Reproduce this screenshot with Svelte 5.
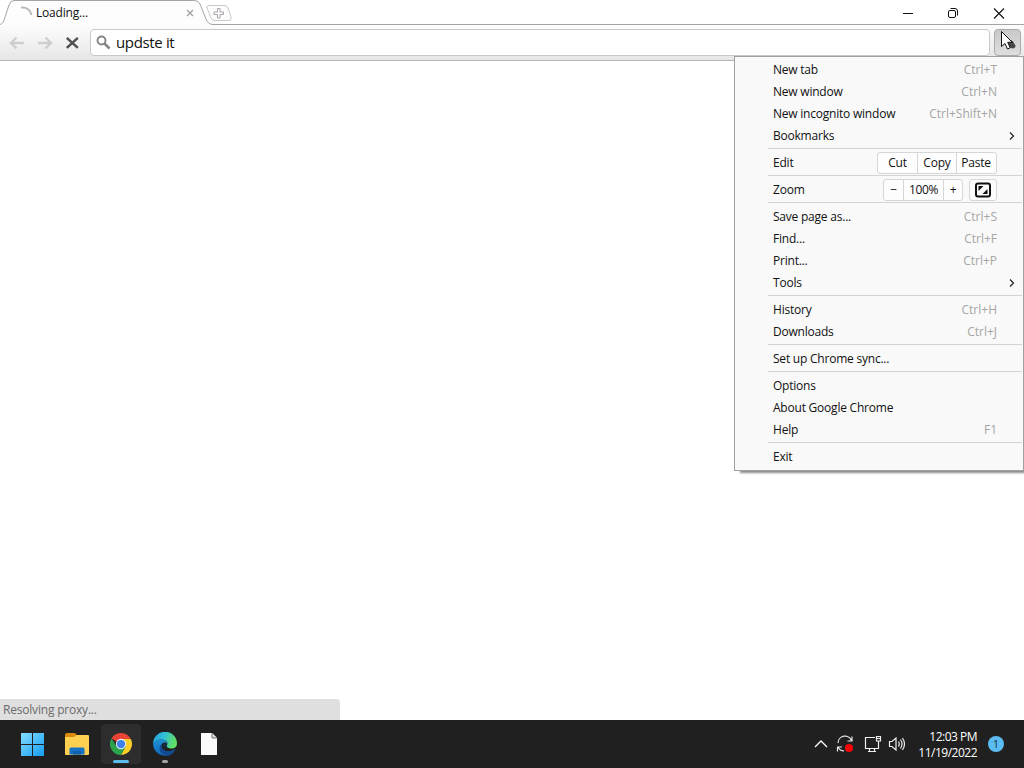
<script>
  const menu = [
    [
      { label: 'New tab', keys: 'Ctrl+T' },
      { label: 'New window', keys: 'Ctrl+N' },
      { label: 'New incognito window', keys: 'Ctrl+Shift+N' },
      { label: 'Bookmarks', submenu: true },
    ],
    [{ label: 'Edit', kind: 'edit' }],
    [{ label: 'Zoom', kind: 'zoom' }],
    [
      { label: 'Save page as...', keys: 'Ctrl+S' },
      { label: 'Find...', keys: 'Ctrl+F' },
      { label: 'Print...', keys: 'Ctrl+P' },
      { label: 'Tools', submenu: true },
    ],
    [
      { label: 'History', keys: 'Ctrl+H' },
      { label: 'Downloads', keys: 'Ctrl+J' },
    ],
    [{ label: 'Set up Chrome sync...' }],
    [
      { label: 'Options' },
      { label: 'About Google Chrome' },
      { label: 'Help', keys: 'F1' },
    ],
    [{ label: 'Exit' }],
  ];

  let query = $state('updste it');
</script>

<div class="desktop">
  <header class="tabstrip">
    <div class="tab">
      <svg class="tab-shape" width="240" height="25" viewBox="0 0 240 25">
        <path d="M0 24.5C4 23 4 20 6 14L9 5Q10.500 .5 14 .5H194Q198.500 .5 200 4L206 19Q208 24.500 213 24.500V25H0Z" fill="#fdfdfd" />
        <path d="M0 24.5C4 23 4 20 6 14L9 5Q10.500 .5 14 .5H194Q198.500 .5 200 4L206 19Q208 24.500 213 24.500H240" fill="none" stroke="#a5a5a5" />
        <path d="M209 5.500H225Q227 5.500 228 8L231 17Q232 20.500 229 20.500H214Q212 20.500 211 18L207 8Q206.500 5.500 209 5.500Z" fill="#fcfcfc" stroke="#c9c9c9" />
        <path d="M217.500 8.500h2.500v3.500h3.500v2.500h-3.500v3.500h-2.500v-3.500h-3.500v-2.500h3.500Z" fill="#fff" stroke="#aaa3aa" />
      </svg>
      <svg class="spinner" width="14" height="14" viewBox="0 0 14 14">
        <path d="M1 1.700A8.500 8.500 0 0 1 11.300 9" fill="none" stroke="#b9b9b9" stroke-width="1.800" />
      </svg>
      <span class="tab-title">Loading...</span>
      <svg class="tab-close" width="8" height="8" viewBox="0 0 8 8">
        <path d="M1 1l6 6M7 1L1 7" stroke="#a5a0a5" stroke-width="1.400" />
      </svg>
    </div>
    <div class="window-buttons">
      <svg width="12" height="12" viewBox="0 0 12 12"><path d="M1 6.500h10" stroke="#111" /></svg>
      <svg width="12" height="12" viewBox="0 0 12 12" fill="none" stroke="#111">
        <rect x="1.500" y="3.500" width="7" height="7" rx="1.500" />
        <path d="M3.500 1.500h4.500q2.500 0 2.500 2.500v4.500" />
      </svg>
      <svg width="12" height="12" viewBox="0 0 12 12"><path d="M1 1.500l10 10M11 1.500l-10 10" stroke="#111" stroke-width="1.100" /></svg>
    </div>
  </header>

  <div class="toolbar">
    <svg class="nav" width="16" height="14" viewBox="0 0 16 14" fill="none" stroke="#cecece" stroke-width="2.400">
      <path d="M7.500 1.500L2 7l5.500 5.500M2.500 7H15" />
    </svg>
    <svg class="nav" width="16" height="14" viewBox="0 0 16 14" fill="none" stroke="#cecece" stroke-width="2.400">
      <path d="M8.500 1.500L14 7l-5.500 5.500M13.500 7H1" />
    </svg>
    <svg class="nav stop" width="14" height="14" viewBox="0 0 14 14" fill="none" stroke="#505050" stroke-width="2.500">
      <path d="M1.800 1.800l11 10M12.800 1.800L1.800 11.800" />
    </svg>
    <div class="omnibox">
      <svg width="15" height="15" viewBox="0 0 15 15" fill="none" stroke="#858585">
        <circle cx="5.500" cy="5.500" r="4" stroke-width="1.900" />
        <path d="M8.500 8.500l5 5" stroke-width="2.700" />
      </svg>
      <span>{query}</span>
    </div>
    <div class="wrench"></div>
  </div>

  <main class="page">
    <div class="status">Resolving proxy...</div>
  </main>

  <footer class="taskbar">
    <div class="apps">
      <div class="app">
        <svg width="24" height="24" viewBox="0 0 24 24">
          <defs>
            <linearGradient id="win" x1="0" y1="0" x2="1" y2="1">
              <stop offset="0" stop-color="#86deff" />
              <stop offset="1" stop-color="#139df2" />
            </linearGradient>
          </defs>
          <path d="M0 1h11v11H0ZM12 1h11v11H12ZM0 13h11v11H0ZM12 13h11v11H12Z" fill="url(#win)" />
        </svg>
      </div>
      <div class="app">
        <svg width="26" height="24" viewBox="0 0 26 24">
          <path d="M1 3q0-2 2-2h7q2 0 2.500 2l.5 3H1Z" fill="#d98c0b" />
          <path d="M1 5h9l2.500-2H24q1 0 1 1v18q0 1-1 1H2q-1 0-1-1Z" fill="#fdd052" />
          <path d="M5.500 22.500V17q0-1.500 1.500-1.500h12q1.500 0 1.500 1.500v5.500Z" fill="#1673c4" />
          <path d="M9 22.500V20q0-1 1-1h6q1 0 1 1v2.500Z" fill="#0f62b0" />
        </svg>
      </div>
      <div class="app active">
        <svg width="22" height="22" viewBox="0 0 24 24">
          <path d="M12 12L1.600 6A12 12 0 0 1 22.400 6Z" fill="#e94335" />
          <path d="M12 6.500H22.700A12 12 0 0 1 12 24L16.800 14.700Z" fill="#fdce28" />
          <path d="M1.600 6A12 12 0 0 0 12 24L17 15L7.200 14.700Z" fill="#2ba24c" />
          <circle cx="12" cy="12" r="5.600" fill="#e8eef5" />
          <circle cx="12" cy="12" r="4.500" fill="#3e80e9" />
        </svg>
        <i class="bar"></i>
      </div>
      <div class="app">
        <svg width="24" height="24" viewBox="0 0 24 24">
          <defs>
            <linearGradient id="edge-top" x1="0" y1="0" x2="1" y2=".3">
              <stop offset="0" stop-color="#1f9fe0" />
              <stop offset=".5" stop-color="#31bfd6" />
              <stop offset="1" stop-color="#61de65" />
            </linearGradient>
            <linearGradient id="edge-body" x1="0" y1="0" x2="0" y2="1">
              <stop offset="0" stop-color="#2192d5" />
              <stop offset="1" stop-color="#0c69bb" />
            </linearGradient>
          </defs>
          <path d="M0 12A12 12 0 0 1 24 11.500C24 15.500 20.500 17 17.500 16.500Q13 16 14 13.500Q16 8.500 9 7.500Q3 7 0 12Z" fill="url(#edge-top)" />
          <path d="M0 12Q3 7 9 7.300Q14 8.500 14.500 12Q13 9.500 10 11Q7 13 9 17Q13 22 22.500 17.500A12 12 0 0 1 0 12Z" fill="url(#edge-body)" />
          <path d="M10.500 10.500Q7.500 13 9.500 16.500Q13.500 21.500 22.500 17.500Q19 23.500 13.500 24Q6.500 22 6.500 16Q7 12 10.500 10.500Z" fill="#124b93" />
          <path d="M10.500 10.800Q13.500 10 14 13.500Q13 15.500 16 16.500Q11 17 10 13.500Q9.700 12 10.500 10.800Z" fill="#1c2b3a" />
        </svg>
        <i class="dot"></i>
      </div>
      <div class="app">
        <svg width="18" height="24" viewBox="0 0 18 24">
          <path d="M1 1h11l5 5v17H1Z" fill="#fafafa" />
          <path d="M12 1v5h5" fill="#ddd" stroke="#555" stroke-width=".8" />
        </svg>
      </div>
    </div>

    <div class="tray">
      <svg width="14" height="10" viewBox="0 0 14 10" fill="none" stroke="#fff" stroke-width="1.300"><path d="M1 8l6-6 6 6" /></svg>
      <svg class="sync" width="18" height="18" viewBox="0 0 18 18" fill="none" stroke="#e8e8e8" stroke-width="1.200">
        <path d="M2 8A7 7 0 0 1 15.500 5.500M16 1.500v4.500h-4.500M1.500 16.500V12H6M2 12A7 7 0 0 0 8 16" />
        <circle cx="13" cy="13" r="4" fill="#f50505" stroke="none" />
      </svg>
      <svg class="network" width="18" height="18" viewBox="0 0 18 18" fill="none" stroke="#eee" stroke-width="1.200">
        <path d="M11 2.500H1.500v11h13V9M5.500 13.500v3M10.500 13.500v3M4 16.500h8" />
        <path d="M12.500 1.500h4v4.500h-4ZM14.500 6v3M12.500 3.500h4" />
      </svg>
      <svg class="volume" width="18" height="16" viewBox="0 0 18 16" fill="none" stroke="#eee" stroke-width="1.200">
        <path d="M1.500 5.500H4L8 2v12L4 10.500H1.500Z" />
        <path d="M10.500 5.500q1.500 2.500 0 5M12.500 3.500q3 4.500 0 9M14.500 2q4 6 0 12" />
      </svg>
      <div class="clock">
        <span>12:03 PM</span>
        <span>11/19/2022</span>
      </div>
      <div class="badge">1</div>
    </div>
  </footer>

  <nav class="menu">
    {#each menu as group, i}
      {#if i > 0}
        <hr />
      {/if}
      {#each group as item}
        <div class="item">
          <span class="label">{item.label}</span>
          {#if item.keys}
            <span class="keys">{item.keys}</span>
          {:else if item.submenu}
            <svg class="arrow" width="6" height="10" viewBox="0 0 6 10" fill="none" stroke="#222" stroke-width="1.200"><path d="M1 1.500L4.500 5 1 8.500" /></svg>
          {:else if item.kind === 'edit'}
            <div class="buttons edit">
              <span>Cut</span>
              <span>Copy</span>
              <span>Paste</span>
            </div>
          {:else if item.kind === 'zoom'}
            <div class="buttons zoom">
              <span>−</span>
              <span class="percent">100%</span>
              <span>+</span>
            </div>
            <div class="buttons fullscreen">
              <svg width="16" height="16" viewBox="0 0 16 16">
                <rect x="1" y="1.500" width="14" height="13" rx="2" fill="#fff" stroke="#111" stroke-width="2" />
                <path d="M3.500 4h5l-5 5ZM12.500 12h-5l5-5Z" fill="#111" />
              </svg>
            </div>
          {/if}
        </div>
      {/each}
    {/each}
  </nav>

  <svg class="cursor" width="18" height="22" viewBox="0 0 18 22">
    <path d="M8 13l3-3 2 1.500 2.500 4q0 3-3 3L9 17Z" fill="#484848" />
    <path d="M1.500 1.500v15l3.500-3 2.500 5.500 2.700-1.200-2.500-5.500h4.600Z" fill="#fff" stroke="#111" />
  </svg>
</div>

<style>
  :global(body) {
    margin: 0;
    overflow: hidden;
  }

  .desktop {
    position: relative;
    display: flex;
    flex-direction: column;
    width: 1024px;
    height: 768px;
    background: #fff;
    color: #111;
    font-family: 'Open Sans', 'Noto Sans', sans-serif;
    font-size: 12px;
  }

  .desktop * {
    box-sizing: border-box;
  }

  svg {
    display: block;
    flex-shrink: 0;
  }

  .tabstrip {
    display: flex;
    justify-content: space-between;
    height: 25px;
    background: linear-gradient(#a5a5a5, #a5a5a5) bottom right / 784px 1px no-repeat;
  }

  .tab {
    position: relative;
    display: flex;
    align-items: center;
    width: 240px;
    padding-left: 20px;
  }

  .tab-shape {
    position: absolute;
    left: 0;
    top: 0;
  }

  .spinner,
  .tab-title,
  .tab-close {
    position: relative;
  }

  .tab-title {
    width: 150px;
    margin-left: 2px;
    letter-spacing: -0.2px;
  }

  .window-buttons {
    display: flex;
    align-items: center;
    gap: 34px;
    padding-right: 19px;
  }

  .window-buttons svg:first-child {
    margin-right: -1px;
  }

  .toolbar {
    display: flex;
    align-items: center;
    height: 36px;
    padding: 0 3px 0 9px;
    background: linear-gradient(#fdfdfd, #e6e6e6);
    border-bottom: 1px solid #b5b5b5;
  }

  .nav {
    margin-right: 12px;
  }

  .stop {
    margin-right: 11px;
  }

  .omnibox {
    display: flex;
    align-items: center;
    gap: 5px;
    width: 900px;
    height: 27px;
    padding: 0 0 1px 5px;
    background: #fff;
    border: 1px solid #c9c9c9;
    border-radius: 4px;
    font-size: 15px;
    letter-spacing: -0.35px;
  }

  .wrench {
    width: 27px;
    height: 27px;
    margin-left: 4px;
    background: linear-gradient(#c9c9c9, #dedede);
    border: 1px solid #aaa;
    border-radius: 4px;
  }

  .page {
    flex: 1;
    display: flex;
    align-items: flex-end;
  }

  .status {
    width: 340px;
    height: 21px;
    padding-left: 3px;
    line-height: 22px;
    background: #dfdfdf;
    border-radius: 0 4px 0 0;
    color: #6b6b6b;
    letter-spacing: -0.2px;
  }

  .taskbar {
    display: flex;
    justify-content: space-between;
    height: 48px;
    background: #202020;
    color: #fff;
  }

  .apps {
    display: flex;
    align-items: center;
    gap: 4px;
    padding-left: 13px;
  }

  .app {
    position: relative;
    display: flex;
    align-items: center;
    justify-content: center;
    width: 40px;
    height: 40px;
  }

  .active {
    background: #2d2d2d;
    border-radius: 4px;
  }

  .bar,
  .dot {
    position: absolute;
    bottom: 1px;
    width: 16px;
    height: 3px;
    border-radius: 2px;
    background: #5cbcee;
  }

  .dot {
    width: 6px;
    background: #a5a5a5;
  }

  .tray {
    display: flex;
    align-items: center;
    padding-right: 20px;
  }

  .sync {
    margin-left: 8px;
  }

  .network {
    margin-left: 10px;
  }

  .volume {
    margin-left: 6px;
  }

  .clock {
    display: flex;
    flex-direction: column;
    align-items: flex-end;
    width: 71px;
    padding-top: 1px;
    line-height: 16px;
    letter-spacing: -0.5px;
  }

  .badge {
    width: 16px;
    height: 16px;
    margin-left: 11px;
    border-radius: 50%;
    background: #5bbcf2;
    color: #153347;
    font-size: 11px;
    line-height: 16px;
    text-align: center;
  }

  .menu {
    position: absolute;
    left: 734px;
    top: 56px;
    width: 290px;
    height: 415px;
    padding: 2px 1px 2px 33px;
    background: #f9f9f9;
    border: 1px solid #a0a0a0;
    box-shadow: 5px 3px 2px -1px #8b8b8b;
  }

  hr {
    height: 1px;
    margin: 1px 0 3px;
    border: 0;
    background: #d3d3d3;
  }

  .item {
    display: flex;
    align-items: center;
    height: 22px;
    padding: 0 25px 0 5px;
    letter-spacing: -0.22px;
  }

  .label {
    flex: 1;
    padding-bottom: 2px;
  }

  .keys {
    padding-bottom: 2px;
    color: #a5a5a5;
    letter-spacing: 0;
  }

  .arrow {
    margin-right: -18px;
  }

  .buttons {
    display: flex;
    height: 22px;
    background: #fdfdfd;
    border: 1px solid #d6d6d6;
    border-radius: 3px;
  }

  .buttons span {
    display: flex;
    align-items: center;
    justify-content: center;
    width: 39px;
    padding-bottom: 2px;
  }

  .buttons span + span {
    border-left: 1px solid #d6d6d6;
  }

  .edit {
    width: 120px;
  }

  .zoom {
    margin-right: 6px;
  }

  .zoom span {
    width: 19px;
  }

  .zoom .percent {
    width: 40px;
    letter-spacing: -0.4px;
  }

  .fullscreen {
    align-items: center;
    justify-content: center;
    width: 28px;
  }

  .cursor {
    position: absolute;
    left: 1000px;
    top: 30px;
  }
</style>
